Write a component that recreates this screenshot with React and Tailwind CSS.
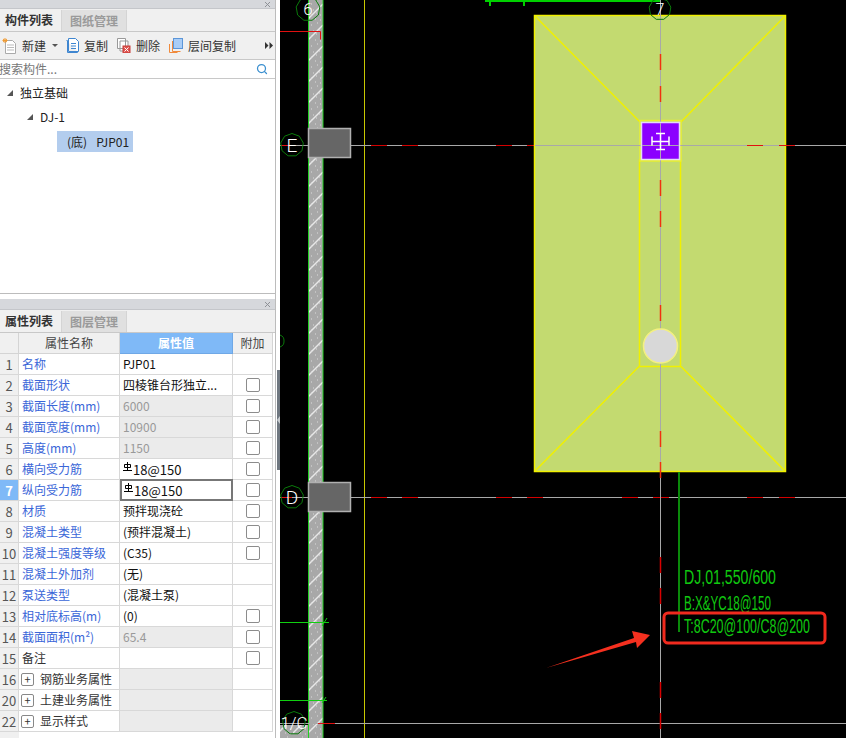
import { Search, X } from 'lucide-react';

const rows = [
  { no: '1', name: '名称', value: 'PJP01' },
  { no: '2', name: '截面形状', value: '四棱锥台形独立...', check: true },
  { no: '3', name: '截面长度(mm)', value: '6000', check: true, readonly: true },
  { no: '4', name: '截面宽度(mm)', value: '10900', check: true, readonly: true },
  { no: '5', name: '高度(mm)', value: '1150', check: true, readonly: true },
  { no: '6', name: '横向受力筋', value: '18@150', check: true, rebar: true },
  { no: '7', name: '纵向受力筋', value: '18@150', check: true, rebar: true, active: true },
  { no: '8', name: '材质', value: '预拌现浇砼', check: true },
  { no: '9', name: '混凝土类型', value: '(预拌混凝土)', check: true },
  { no: '10', name: '混凝土强度等级', value: '(C35)', check: true },
  { no: '11', name: '混凝土外加剂', value: '(无)' },
  { no: '12', name: '泵送类型', value: '(混凝土泵)' },
  { no: '13', name: '相对底标高(m)', value: '(0)', check: true },
  { no: '14', name: '截面面积(m²)', value: '65.4', check: true, readonly: true },
  { no: '15', name: '备注', value: '', check: true, black: true },
  { no: '16', name: '钢筋业务属性', group: true },
  { no: '20', name: '土建业务属性', group: true },
  { no: '22', name: '显示样式', group: true },
];

const redDashes = [371, 402, 496, 527, 622, 653, 747, 779];
const vertDashes = [54, 86, 180, 211, 305, 431, 462, 557, 588, 682, 713];

function Rebar() {
  return (
    <svg width="9" height="10" viewBox="0 0 9 10" className="mr-px -mt-1 shrink-0" fill="none" stroke="#000" strokeWidth="1">
      <path d="M4.5 0v9M1.5 2.5v3h6v-3h-6M0 8.500h9" />
    </svg>
  );
}

function PanelHead({ active, other, titleClass }) {
  return (
    <>
      <div className={`${titleClass} bg-[#d6d8dc] flex justify-end items-center pr-[3px] border-b border-[#c4c6ca] box-content`}>
        <X size={9} strokeWidth={2.5} className="text-[#8a8d92]" />
      </div>
      <div className="h-[22px] flex bg-[#f0f0f0] border-b border-[#c8c8c8] box-content">
        <div className="w-[61px] pl-[5px] flex items-center font-bold text-[#333]">{active}</div>
        <div className="w-[66px] mt-px flex items-center justify-center bg-[#e0e0e0] border-x border-[#d4d4d4] font-bold text-[#9a9a9a]">{other}</div>
      </div>
    </>
  );
}

function Toolbar() {
  return (
    <div className="h-[27px] flex items-center bg-[#f0f0f0] border-b border-[#c8c8c8] box-content text-[#333]">
      <svg width="15" height="16" viewBox="0 0 15 16" className="ml-[2px]" fill="#fff" stroke="#aaa">
        <path d="M3.500 2.500h7l3 3v10h-10z" />
        <path d="M5 7h7M5 9.500h7M5 12h7" stroke="#bbb" />
        <path d="M3 0v5M.5 2.500h5M1 1l4 3M5 1L1 4" stroke="#f09a30" />
      </svg>
      <span className="ml-[5px]">新建</span>
      <span className="ml-[6px] w-0 h-0 border-x-[3px] border-x-transparent border-t-[3px] border-t-[#555]" />
      <svg width="13" height="15" viewBox="0 0 13 15" className="ml-[8px]" fill="#fff" stroke="#3f86d0">
        <path d="M.5 2.500h1v12h10v-1M2.500 .5h7l3 3v10h-10z" />
        <path d="M5 5.500h5M5 8h5M5 10.500h5" />
      </svg>
      <span className="ml-[5px]">复制</span>
      <svg width="14" height="15" viewBox="0 0 14 15" className="ml-[9px]" fill="#fff" stroke="#999">
        <path d="M.5 .5h8v10h-8zM3 3h8v10H3z" />
        <rect x="6" y="8" width="7" height="7" fill="#e05550" stroke="#c83c38" />
        <path d="M7.500 9.500l4 4M11.500 9.500l-4 4" stroke="#fff" />
      </svg>
      <span className="ml-[5px]">删除</span>
      <svg width="14" height="15" viewBox="0 0 14 15" className="ml-[9px]" fill="none">
        <path d="M3.500 3v10.500h8M.5 6v8.500h8" stroke="#f08a3c" />
        <rect x="4.500" y=".5" width="9" height="10" fill="#a9cdf7" stroke="#5c96d8" />
      </svg>
      <span className="ml-[5px]">层间复制</span>
      <svg width="8" height="7" viewBox="0 0 8 7" className="ml-[29px]" fill="#333">
        <path d="M0 0l3.500 3.500L0 7zM4.500 0L8 3.500 4.500 7z" />
      </svg>
    </div>
  );
}

function Tree() {
  return (
    <div className="relative flex-1 text-[#222]">
      <div className="h-[24px] mt-[2px] flex items-center pl-[7px]">
        <span className="w-0 h-0 border-l-[6px] border-l-transparent border-b-[6px] border-b-[#555]" />
        <span className="ml-[7px]">独立基础</span>
      </div>
      <div className="h-[24px] flex items-center pl-[27px]">
        <span className="w-0 h-0 border-l-[6px] border-l-transparent border-b-[6px] border-b-[#555]" />
        <span className="ml-[7px]">DJ-1</span>
      </div>
      <div className="h-[21px] w-[76px] mt-[2px] ml-[57px] pl-[10px] flex items-center bg-[#b3cdee]">
        (底)<span className="ml-[9px]">PJP01</span>
      </div>
    </div>
  );
}

function PropTable() {
  return (
    <div className="grid grid-cols-[19px_101px_113px_40px] auto-rows-[21px] w-[273px]">
      <div className="bg-[#f0f0f0] border-r border-b border-[#d4d4d4]" />
      <div className="bg-[#f0f0f0] border-r border-b border-[#d4d4d4] flex items-center justify-center text-[#444]">属性名称</div>
      <div className="bg-[#7fb9f7] border-r border-b border-[#6fa8e6] flex items-center justify-center font-bold text-white">属性值</div>
      <div className="bg-[#f0f0f0] border-b border-r border-[#d4d4d4] flex items-center justify-center text-[#444]">附加</div>
      {rows.map((row) => (
        <Row key={row.no} row={row} />
      ))}
    </div>
  );
}

function Row({ row }) {
  const line = 'border-r border-b border-[#d8d8d8]';
  return (
    <>
      <div
        className={
          row.active
            ? `${line} bg-[#7fb9f7] flex items-center justify-center font-bold text-white text-[13px]`
            : `${line} bg-[#f0f0f0] flex items-center justify-center text-[#555] text-[13px]`
        }
      >
        {row.no}
      </div>
      {row.group ? (
        <div className={`${line} flex items-center pl-[2px] text-[#333]`}>
          <span className="w-[13px] h-[13px] mr-[6px] rounded-[2px] border border-[#888] flex items-center justify-center text-[11px] leading-none">+</span>
          {row.name}
        </div>
      ) : (
        <div className={row.black ? `${line} flex items-center pl-[3px] text-[#333]` : `${line} flex items-center pl-[3px] text-[#3a66d8]`}>
          {row.name}
        </div>
      )}
      <div
        className={
          row.active
            ? 'border-2 border-[#777] -mt-px h-[22px] flex items-center pl-[2px] text-[#111] text-[13px]'
            : row.readonly
              ? `${line} bg-[#ebebeb] flex items-center pl-[3px] text-[#999]`
              : row.group
                ? `${line} bg-[#ebebeb]`
                : row.rebar
                  ? `${line} flex items-center pl-[3px] text-[#111] text-[13px]`
                  : `${line} flex items-center pl-[3px] text-[#111]`
        }
      >
        {row.rebar && <Rebar />}
        {row.value}
      </div>
      <div className={`${line} flex items-center justify-center`}>
        {row.check && <span className="w-[14px] h-[14px] rounded-[2px] border border-[#8c8c8c] bg-white" />}
      </div>
    </>
  );
}

function Hex({ cx, cy, r, label, size = 19 }) {
  const pts = [...Array(9)]
    .map((_, i) => {
      const a = (i * 2 * Math.PI) / 9 - Math.PI / 2;
      return `${cx + r * Math.cos(a)},${cy + r * Math.sin(a)}`;
    })
    .join(' ');
  return (
    <>
      <polygon points={pts} fill="none" stroke="#0a7a0a" strokeWidth="1" />
      <text x={cx} y={cy + size * 0.36} textAnchor="middle" fill="#fff" fontSize={size} fontWeight="300" fontFamily="Roboto, sans-serif">
        {label}
      </text>
    </>
  );
}

function AxisH({ y, from }) {
  return (
    <>
      <line x1={from} x2="846" y1={y + 0.5} y2={y + 0.5} stroke="#a8a8a8" />
      {redDashes.map((x) => (
        <line key={x} x1={x} x2={x + 16} y1={y + 0.5} y2={y + 0.5} stroke="#d40000" />
      ))}
    </>
  );
}

function Drawing() {
  return (
    <svg viewBox="280 0 566 738" className="w-[566px] h-[738px] block bg-black">
      <defs>
        <pattern id="hatch" x="308" y="0" width="15" height="21" patternUnits="userSpaceOnUse">
          <rect width="15" height="21" fill="#a8a8a8" />
          <path d="M0 19L15 4" stroke="#e8e8e8" strokeWidth="1.500" />
          <path d="M3 4h1M9 2h1M11 9h1M5 10h1M12 15h1M8 13h1M3 15h1M7 19h1M12 20h1" stroke="#dcdcdc" />
        </pattern>
      </defs>

      {/* wall */}
      <rect x="280" y="725" width="28" height="13" fill="url(#hatch)" />
      <rect x="308.500" y="-2" width="14.500" height="742" fill="url(#hatch)" stroke="#22d022" />
      <line x1="364.500" x2="364.500" y1="0" y2="738" stroke="#c8c800" />
      <path d="M280 31.500h40.500v8" fill="none" stroke="#e01010" />

      {/* axis lines */}
      <AxisH y={145} from={351} />
      <AxisH y={497} from={351} />
      <line x1="280" x2="846" y1="723.500" y2="723.500" stroke="#a8a8a8" />
      <line x1="318" x2="335" y1="723.500" y2="723.500" stroke="#e01010" />
      <line x1="280" x2="308" y1="145.500" y2="145.500" stroke="#a8a8a8" />
      <line x1="281" x2="292" y1="145.500" y2="145.500" stroke="#e01010" />
      <line x1="280" x2="308" y1="497.500" y2="497.500" stroke="#a8a8a8" />
      <line x1="281" x2="292" y1="497.500" y2="497.500" stroke="#e01010" />

      {/* green dimension lines */}
      <path d="M280 622.500h49M280 700.500h47M322 626l5-8M322 703l4-6" stroke="#10d010" fill="none" />
      <path d="M485 1h175M490 1v5M524 1v5" stroke="#00d000" strokeWidth="2" fill="none" />
      <path d="M280 335a6 6 0 0 1 4 6a6 6 0 0 1 -4 6" stroke="#0a7a0a" fill="none" />

      {/* footing */}
      <rect x="534.500" y="15.500" width="251" height="456" fill="#c3da70" stroke="#f0f000" strokeWidth="1.500" />
      <path d="M534.500 15.500L640 122M785.500 15.500L681 122M534.500 471.500L639 366.500M785.500 471.500L681 366.500" stroke="#f0f000" strokeWidth="1.500" fill="none" />
      <rect x="639.500" y="160" width="41" height="206.500" fill="none" stroke="#f0f000" strokeWidth="1.500" />
      <rect x="640" y="120.500" width="41" height="40.500" fill="none" stroke="#e8f030" strokeWidth="1.500" />

      <line x1="660.500" x2="660.500" y1="0" y2="738" stroke="#a8a8a8" />
      {vertDashes.map((y) => (
        <line key={y} x1="660.500" x2="660.500" y1={y} y2={y + 16} stroke={y > 471 ? '#d80000' : '#f03010'} strokeWidth="1.500" />
      ))}
      <line x1="535" x2="786" y1="145.500" y2="145.500" stroke="#a8a8a8" />
      {[747, 779].map((x) => (
        <line key={x} x1={x} x2={x + 16} y1="145.500" y2="145.500" stroke="#e01010" />
      ))}

      {/* column */}
      <rect x="641.500" y="122.500" width="38" height="37" fill="#8b00ff" stroke="#e6d8f5" strokeWidth="1.500" />
      <line x1="642" x2="679" y1="145.500" y2="145.500" stroke="#b0a0b8" />
      <line x1="660.500" x2="660.500" y1="123" y2="159" stroke="#b0a0b8" />
      <path d="M656 133.500h9M656 149.500h9M660.500 133v17M652 141.500h17M652 136.500v9M669 136.500v9" stroke="#fff" strokeWidth="1.500" fill="none" />

      {/* pile */}
      <circle cx="660.500" cy="346" r="17" fill="#d8d8d8" stroke="#f4f080" strokeWidth="1.500" />

      <line x1="679" x2="679" y1="472" y2="632" stroke="#0a8a0a" strokeWidth="2" />
      <Hex cx={308} cy={9} r={12} label="6" size={17} />
      <Hex cx={660} cy={9} r={11} label="7" size={16} />
      <Hex cx={292} cy={145} r={11.500} label="E" />
      <Hex cx={292} cy={497} r={11.500} label="D" />
      <Hex cx={294} cy={723} r={11.500} label="1/C" size={17} />

      {/* boxes on the axes */}
      <rect x="308.500" y="128.500" width="42" height="29" fill="#666" stroke="#b0b0b0" strokeWidth="1.500" />
      <rect x="308.500" y="482.500" width="42" height="29" fill="#666" stroke="#b0b0b0" strokeWidth="1.500" />

      {/* annotation */}
      <g fill="#10c810" fontFamily="Liberation Sans, sans-serif" fontSize="14">
        <text transform="translate(684 584) scale(1 1.500)" textLength="92" lengthAdjust="spacingAndGlyphs">DJ,01,550/600</text>
        <text transform="translate(684 610) scale(1 1.500)" textLength="87" lengthAdjust="spacingAndGlyphs">B:X&amp;YC18@150</text>
        <text transform="translate(684 633) scale(1 1.500)" textLength="126" lengthAdjust="spacingAndGlyphs">T:8C20@100/C8@200</text>
      </g>
      <rect x="664" y="613" width="161" height="30" rx="4" fill="none" stroke="#f02a1e" strokeWidth="3" />
      <polygon points="546,668 634,638 632,631 650,635 637,648 636,642" fill="#f5301f" />
    </svg>
  );
}

export default function App() {
  return (
    <div className="w-[846px] h-[738px] flex overflow-hidden bg-white text-[12px] leading-none font-['Noto_Sans_CJK_SC',sans-serif]">
      <div className="w-[276px] flex flex-col border-r border-[#bcbcbc] box-border shrink-0">
        <div className="h-[294px] flex flex-col border-b border-[#bcbcbc]">
          <PanelHead active="构件列表" other="图纸管理" titleClass="h-[8px]" />
          <Toolbar />
          <div className="h-[18px] flex items-center justify-between pr-[7px] border-b border-[#c8c8c8] box-content">
            <span className="text-[#777] -ml-px">搜索构件...</span>
            <Search size={12} strokeWidth={2.5} className="text-[#3b8fcf]" />
          </div>
          <Tree />
        </div>
        <div className="mt-[5px] flex-1 flex flex-col">
          <PanelHead active="属性列表" other="图层管理" titleClass="h-[10px]" />
          <PropTable />
          <div className="flex-1 w-[19px] bg-[#f0f0f0]" />
        </div>
      </div>
      <div className="w-[4px] shrink-0">
        <div className="mt-[370px] h-[100px] ml-px bg-[#6f7780] flex items-center">
          <span className="w-0 h-0 border-y-[4px] border-y-transparent border-r-[3px] border-r-[#c8ccd0]" />
        </div>
      </div>
      <Drawing />
    </div>
  );
}
